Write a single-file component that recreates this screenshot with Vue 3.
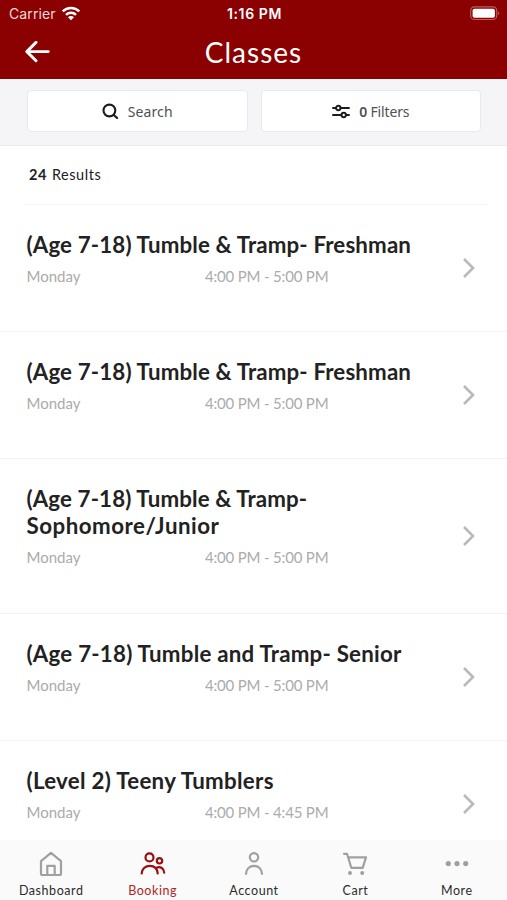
<template>
  <div class="screen">
    <header class="header">
      <div class="status-bar">
        <div class="carrier">
          <span>Carrier</span>
          <svg width="20" height="15" viewBox="0 0 20 15">
            <g fill="none" stroke="#fff" stroke-width="2.5">
              <path d="M1.7 5.4a11.7 11.7 0 0 1 16.6 0" />
              <path d="M5 8.9a7 7 0 0 1 10 0" />
            </g>
            <path d="M10 14.2 7 11.2a4.2 4.2 0 0 1 6 0z" fill="#fff" />
          </svg>
        </div>
        <span class="time">1:16 PM</span>
        <div class="battery">
          <svg width="30" height="15" viewBox="0 0 30 15">
            <rect x=".7" y=".9" width="26" height="12.6" rx="3.6" fill="none" stroke="#c05c5c" stroke-width="1.1" />
            <rect x="2.6" y="2.7" width="22.3" height="9" rx="1.8" fill="#fff" />
            <path d="M28.1 5.2c1.6.7 1.6 3.3 0 4z" fill="#c05c5c" />
          </svg>
        </div>
      </div>
      <div class="nav-bar">
        <svg class="back" width="26" height="22" viewBox="0 0 26 22">
          <path d="M11 1.4 1.8 10.6l9.2 9.2M1.8 10.6h21.5" fill="none" stroke="#fff" stroke-width="2.9" stroke-linecap="round" stroke-linejoin="round" />
        </svg>
        <h1>Classes</h1>
      </div>
    </header>

    <div class="toolbar">
      <button class="tool">
        <svg width="17" height="17" viewBox="0 0 17 17" fill="none" stroke="#1c1c1c" stroke-width="2.1" stroke-linecap="round">
          <circle cx="7.4" cy="7.5" r="5.9" />
          <path d="m11.8 11.9 3.3 3.2" />
        </svg>
        <span class="search-label">Search</span>
      </button>
      <button class="tool">
        <svg class="sliders" width="19" height="15" viewBox="0 0 19 15" fill="none" stroke="#1c1c1c" stroke-width="1.9" stroke-linecap="round">
          <path d="M1 4h3M8.5 4H17M1 11h8.4M14 11h3" />
          <circle cx="6.3" cy="4" r="2.2" />
          <circle cx="11.7" cy="11" r="2.2" />
        </svg>
        <span class="filter-label"><b>0</b> Filters</span>
      </button>
    </div>

    <div class="results"><b>24</b> Results</div>

    <main class="list">
      <div v-for="(item, i) in classes" :key="i" class="row">
        <div class="info">
          <h2>
            <span v-for="line in item.title" :key="line.text" class="line" :style="{ letterSpacing: line.spacing + 'px' }">{{ line.text }}</span>
          </h2>
          <div class="meta">
            <span class="day">{{ item.day }}</span>
            <span class="hours">{{ item.time }}</span>
          </div>
        </div>
        <svg class="chevron" width="13" height="22" viewBox="0 0 13 22">
          <path d="m2 2 9 9-9 9" fill="none" stroke="#b9b9b9" stroke-width="2.6" />
        </svg>
      </div>
    </main>

    <nav class="tabs">
      <div v-for="tab in tabs" :key="tab.name" class="tab" :class="{ active: tab.name === 'Booking' }">
        <svg width="28" height="28" viewBox="0 0 28 28" fill="none" stroke="currentColor" stroke-width="2.2" stroke-linecap="round" stroke-linejoin="round">
          <path v-if="tab.path" :d="tab.path" />
          <circle v-for="(d, i) in tab.dots" :key="i" :cx="d[0]" :cy="d[1]" :r="d[2]" fill="currentColor" stroke="none" />
        </svg>
        <span>{{ tab.name }}</span>
      </div>
    </nav>
  </div>
</template>

<script setup>
const freshman = [{ text: '(Age 7-18) Tumble & Tramp- Freshman', spacing: 0.14 }]

const classes = [
  { title: freshman, day: 'Monday', time: '4:00 PM - 5:00 PM' },
  { title: freshman, day: 'Monday', time: '4:00 PM - 5:00 PM' },
  {
    title: [
      { text: '(Age 7-18) Tumble & Tramp-', spacing: 0.12 },
      { text: 'Sophomore/Junior', spacing: 0.5 }
    ],
    day: 'Monday',
    time: '4:00 PM - 5:00 PM'
  },
  { title: [{ text: '(Age 7-18) Tumble and Tramp- Senior', spacing: 0.23 }], day: 'Monday', time: '4:00 PM - 5:00 PM' },
  { title: [{ text: '(Level 2) Teeny Tumblers', spacing: 0.29 }], day: 'Monday', time: '4:00 PM - 4:45 PM' }
]

const tabs = [
  { name: 'Dashboard', path: 'M4 11.2 14 2.8l10 8.4v12.2q0 1.6-1.6 1.6H5.6Q4 25 4 23.4zM10.3 25v-9.2h7.4V25' },
  {
    name: 'Booking',
    path: 'M6.5 7.4a4 4 0 1 0 8 0a4 4 0 1 0-8 0M17.8 10.8a2.7 2.7 0 1 0 5.4 0a2.7 2.7 0 1 0-5.4 0M2.7 23.5c.4-4.8 3.8-7.7 8.2-7.7s7.4 2.9 7.8 7.7M17.5 17.7c4-1.7 7.5.8 7.7 5'
  },
  { name: 'Account', path: 'M9.8 7.3a4.2 4.2 0 1 0 8.4 0a4.2 4.2 0 1 0-8.4 0M6 23.8c.4-4.9 3.6-7.9 8-7.9s7.6 3 8 7.9' },
  {
    name: 'Cart',
    path: 'M3 3.8h3l4.3 14h11.4L25 7.4H7.2',
    dots: [[9, 23, 2], [21.2, 23, 2]]
  },
  { name: 'More', dots: [[5.3, 13.6, 2.6], [14, 13.6, 2.6], [22.7, 13.6, 2.6]] }
]
</script>

<style>
body {
  background: #fff;
}
</style>

<style scoped>
.screen {
  height: 900px;
  display: flex;
  flex-direction: column;
  overflow: hidden;
  font-family: Lato, sans-serif;
  color: #222;
}

.header {
  height: 79px;
  flex: none;
  background: #8b0000;
  color: #fff;
}

.status-bar {
  display: grid;
  grid-template-columns: 1fr auto 1fr;
  align-items: center;
  height: 27px;
  padding: 0 7px 0 9px;
  font-family: Inter, sans-serif;
  font-size: 14px;
}

.carrier {
  display: flex;
  align-items: center;
  gap: 5px;
  color: #f0d8d8;
  letter-spacing: 0.1px;
}

.time {
  font-size: 14px;
  font-weight: 600;
  letter-spacing: 0.6px;
}

.battery {
  display: flex;
  justify-content: flex-end;
}

.nav-bar {
  display: grid;
  grid-template-columns: 1fr auto 1fr;
  align-items: center;
  height: 49px;
  padding: 0 25px;
}

h1 {
  margin: 0;
  font-size: 28px;
  font-weight: 400;
  letter-spacing: 1px;
}

.toolbar {
  display: flex;
  gap: 13px;
  box-sizing: border-box;
  height: 67px;
  flex: none;
  padding: 11px 26px 13px 27px;
  background: #f5f5f7;
  border-bottom: 1px solid #ececee;
}

.tool {
  flex: 1;
  display: flex;
  align-items: center;
  justify-content: center;
  gap: 9px;
  height: 42px;
  padding: 0;
  background: #fff;
  border: 1px solid #e9e9eb;
  border-radius: 4px;
  font: 14px "Noto Sans", sans-serif;
  color: #505050;
}

.search-label {
  letter-spacing: 0.1px;
}

.filter-label {
  margin-left: -1px;
  letter-spacing: -0.15px;
}

.filter-label b {
  font-weight: 600;
}

.results {
  display: flex;
  align-items: center;
  gap: 5px;
  height: 59px;
  flex: none;
  margin: 0 20px 0 24px;
  padding: 0 0 2px 5px;
  border-bottom: 1px solid #f4f4f4;
  box-sizing: border-box;
  font-size: 14.5px;
  letter-spacing: 0.55px;
}

.list {
  flex: 1;
  min-height: 0;
  overflow: hidden;
}

.row {
  display: flex;
  align-items: center;
  justify-content: space-between;
  box-sizing: border-box;
  height: 127.5px;
  padding: 26px 32px 0 26.5px;
  border-bottom: 1px solid #f2f2f2;
}

.row:first-child {
  height: 126.7px;
  padding-top: 25.5px;
}

.row:nth-child(3) {
  height: 154.4px;
}

.info {
  height: 100%;
}

h2 {
  margin: 0;
  font-size: 22.3px;
  font-weight: 700;
  line-height: 27px;
}

.line {
  display: block;
  white-space: nowrap;
}

.meta {
  display: flex;
  margin-top: 6px;
  height: 24px;
  line-height: 24px;
  font-size: 15px;
  color: #ababab;
}

.day {
  width: 178.5px;
}

.hours {
  letter-spacing: -0.18px;
}

.chevron {
  flex: none;
  margin-bottom: 26px;
}

.tabs {
  display: grid;
  grid-template-columns: repeat(5, 1fr);
  height: 60px;
  flex: none;
  background: #fafafa;
}

.tab {
  display: flex;
  flex-direction: column;
  align-items: center;
  padding: 10px 0 0 1px;
  color: #a0a0a0;
}

.tab span {
  margin-top: 4px;
  font-size: 12.5px;
  line-height: 18px;
  letter-spacing: 0.55px;
  color: #2c2c2c;
}

.tab.active {
  color: #970f0f;
}

.tab.active span {
  color: #b02525;
}
</style>
